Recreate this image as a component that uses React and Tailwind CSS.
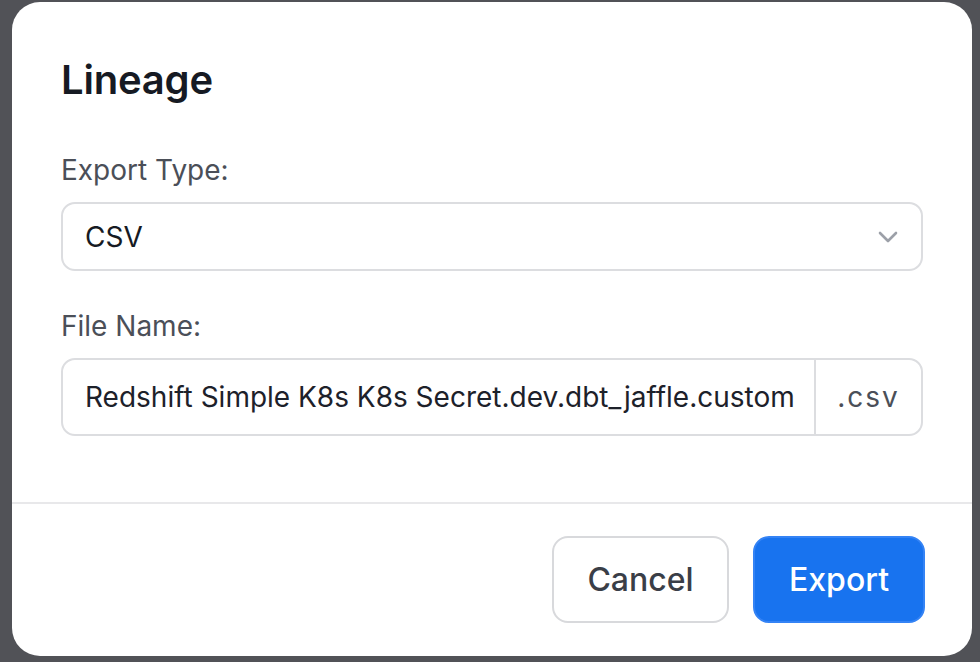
import React from "react";

export default function App() {
  return (
    <div
      className="w-[980px] h-[662px] bg-[#515257] pt-[2px] pl-[12px] overflow-hidden"
      style={{ fontFamily: "Inter, 'Noto Sans', sans-serif" }}
    >
      <div className="w-[960px] h-[654px] bg-white rounded-[28px] flex flex-col">
        <div className="px-[49px] pt-[50px] pb-[66px] flex flex-col">
          <h2 className="text-[40px] leading-[56px] font-semibold text-[#161a23] tracking-[-0.2px]">
            Lineage
          </h2>
          <label className="mt-[42px] text-[28px] leading-[40px] text-[#4b4f58]">
            Export Type:
          </label>
          <div className="mt-[12px] h-[69px] rounded-[14px] border-2 border-[#dcdde0] flex items-center justify-between pl-[22px] pr-[22px] text-[28px] text-[#161a23]">
            <span>CSV</span>
            <svg width="22" height="14" viewBox="0 0 22 14" fill="none">
              <path d="M3 3l8 8 8-8" stroke="#9ca0a8" strokeWidth="2.6" strokeLinecap="round" strokeLinejoin="round" />
            </svg>
          </div>
          <label className="mt-[35px] text-[28px] leading-[40px] text-[#4b4f58]">
            File Name:
          </label>
          <div className="mt-[12px] h-[78px] rounded-[14px] border-2 border-[#dcdde0] flex items-stretch text-[28px]">
            <div className="flex-1 min-w-0 flex items-center pl-[22px] pr-[20px] overflow-hidden whitespace-nowrap text-[#1d212a]">
              <span className="overflow-hidden">Redshift Simple K8s K8s Secret.dev.dbt_jaffle.custom</span>
            </div>
            <div className="w-[107px] shrink-0 border-l-2 border-[#dcdde0] flex items-center justify-center text-[#4b4f58] tracking-[2px]">
              .csv
            </div>
          </div>
        </div>
        <div className="border-t-2 border-[#e8e8ea] flex justify-end gap-[24px] pt-[32px] pr-[47px]">
          <button className="w-[177px] h-[87px] rounded-[16px] border-2 border-[#d8d9dc] bg-white text-[32px] font-medium text-[#3a3e47]">
            Cancel
          </button>
          <button className="w-[172px] h-[87px] rounded-[16px] border-2 border-[#3483f5] bg-[#1873ef] text-[32px] font-medium text-white">
            Export
          </button>
        </div>
      </div>
    </div>
  );
}
